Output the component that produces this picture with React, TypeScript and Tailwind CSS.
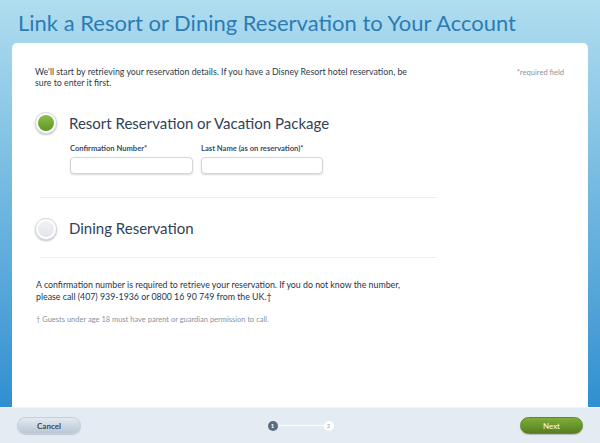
const font = { fontFamily: "Lato, 'Open Sans', sans-serif" };

const Radio = ({ checked }: { checked: boolean }) => (
  <div className="w-[22px] h-[22px] rounded-full bg-white border border-[#d6dbe1] shadow-[0_1px_2px_rgba(0,0,0,0.25)] flex items-center justify-center">
    <div
      className={
        checked
          ? "w-[16px] h-[16px] rounded-full bg-gradient-to-b from-[#8cc047] to-[#5e9626]"
          : "w-[16px] h-[16px] rounded-full bg-gradient-to-b from-[#f1f2f4] to-[#e2e5e9]"
      }
    />
  </div>
);

const Field = ({ label, width }: { label: string; width: string }) => (
  <div className="flex flex-col">
    <span className="text-[7.6px] font-bold text-[#3a4a5e] leading-none mb-[4px]">{label}</span>
    <div className={`${width} h-[17px] rounded-[4px] border border-[#d3d7dc] bg-white shadow-[0_1px_2px_rgba(0,0,0,0.15)]`} />
  </div>
);

export default function App() {
  return (
    <div className="w-[600px] h-[443px] flex flex-col overflow-hidden" style={font}>
      <div className="flex-1 flex flex-col px-[12px] bg-gradient-to-b from-[#b0ddef] via-[#6fb7e0] to-[#2f8fd0]">
        <div className="h-[43px] flex items-center pl-[6px]">
          <h1 className="text-[22px] font-normal text-[#2c7cb4] leading-none pt-[2px]">
            Link a Resort or Dining Reservation to Your Account
          </h1>
        </div>
        <div className="flex-1 bg-white rounded-t-[5px] pl-[23px] pr-[24px] pt-[23px]">
          <div className="flex justify-between items-start">
            <p className="text-[8.8px] leading-[11px] text-[#2e3a48] whitespace-nowrap">
              We'll start by retrieving your reservation details. If you have a Disney Resort hotel reservation, be
              <br />
              sure to enter it first.
            </p>
            <span className="text-[7.6px] text-[#8a94a0] mt-[1px]">*required field</span>
          </div>

          <div className="w-[402px]">
            <div className="flex items-center mt-[24px] gap-[12px]">
              <Radio checked />
              <span className="text-[15px] text-[#334155] leading-none">Resort Reservation or Vacation Package</span>
            </div>
            <div className="flex gap-[8px] ml-[35px] mt-[11px]">
              <Field label="Confirmation Number*" width="w-[123px]" />
              <Field label="Last Name (as on reservation)*" width="w-[122px]" />
            </div>
            <div className="h-px bg-[#eceef1] mt-[23px] ml-[5px]" />
            <div className="flex items-center mt-[20px] gap-[12px]">
              <Radio checked={false} />
              <span className="text-[15px] text-[#334155] leading-none">Dining Reservation</span>
            </div>
            <div className="h-px bg-[#eceef1] mt-[17px] ml-[5px]" />
          </div>

          <p className="text-[8.8px] leading-[12px] text-[#26354a] mt-[21px] pl-[1px] whitespace-nowrap">
            A confirmation number is required to retrieve your reservation. If you do not know the number,
            <br />
            please call (407) 939-1936 or 0800 16 90 749 from the UK.†
          </p>
          <p className="text-[7.5px] text-[#8893a0] mt-[11px] pl-[1px]">
            † Guests under age 18 must have parent or guardian permission to call.
          </p>
        </div>
      </div>
      <div className="h-[36px] bg-[#e4ebf3] border-t border-[#f2f5f8] flex items-center justify-between px-[17px]">
        <button className="w-[64px] h-[17px] rounded-full bg-gradient-to-b from-[#e3eaf1] to-[#b9c7d6] border border-[#c3cfdb] shadow-[0_1px_1px_rgba(0,0,0,0.15)] text-[8px] font-bold text-[#3b4656]">
          Cancel
        </button>
        <div className="flex items-center">
          <div className="w-[10px] h-[10px] rounded-full bg-[#5b6b7f] text-white text-[6px] flex items-center justify-center font-bold">1</div>
          <div className="w-[46px] h-px bg-white" />
          <div className="w-[10px] h-[10px] rounded-full bg-white text-[#9aa5b1] text-[6px] flex items-center justify-center">2</div>
        </div>
        <button className="w-[63px] h-[17px] rounded-full bg-gradient-to-b from-[#7eae3a] to-[#557f1f] border border-[#5f8a27] shadow-[0_1px_1px_rgba(0,0,0,0.2)] text-[8px] text-white">
          Next
        </button>
      </div>
    </div>
  );
}
